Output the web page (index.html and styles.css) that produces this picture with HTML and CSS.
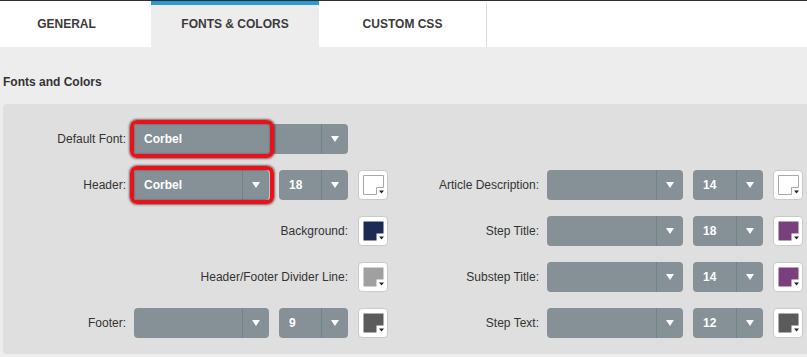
FILE: index.html
```html
<!DOCTYPE html>
<html>
<head>
  <title>Fonts &amp; Colors</title>
  <link rel="stylesheet" href="styles.css">
</head>
<body>
  <div class="tabs">
    <div class="tab tab-first">GENERAL</div>
    <div class="tab active">FONTS &amp; COLORS</div>
    <div class="tab tab-last">CUSTOM CSS</div>
  </div>

  <div class="content">
    <h2>Fonts and Colors</h2>
    <div class="panel">
      <div class="grid grid-left">
        <label class="label">Default Font:</label>
        <div class="select select-wide highlight"><span>Corbel</span><i class="arrow"></i></div>

        <label class="label">Header:</label>
        <div class="select highlight"><span>Corbel</span><i class="arrow"></i></div>
        <div class="select"><span>18</span><i class="arrow"></i></div>
        <div class="swatch swatch-white"><svg width="30" height="30"><path class="fill" d="M5.5 5.5H25.5V17.5H18.5V24.5H5.5Z" fill="#ffffff"/><path d="M21 20.5h5l-2.5 3z" fill="#222"/></svg></div>

        <label class="label label-long">Background:</label>
        <div class="swatch"><svg width="30" height="30"><path class="fill" d="M5.5 5.5H25.5V17.5H18.5V24.5H5.5Z" fill="#1c2a56"/><path d="M21 20.5h5l-2.5 3z" fill="#222"/></svg></div>

        <label class="label label-long">Header/Footer Divider Line:</label>
        <div class="swatch"><svg width="30" height="30"><path class="fill" d="M5.5 5.5H25.5V17.5H18.5V24.5H5.5Z" fill="#a0a0a0"/><path d="M21 20.5h5l-2.5 3z" fill="#222"/></svg></div>

        <label class="label">Footer:</label>
        <div class="select"><span></span><i class="arrow"></i></div>
        <div class="select"><span>9</span><i class="arrow"></i></div>
        <div class="swatch"><svg width="30" height="30"><path class="fill" d="M5.5 5.5H25.5V17.5H18.5V24.5H5.5Z" fill="#5b5b5b"/><path d="M21 20.5h5l-2.5 3z" fill="#222"/></svg></div>
      </div>

      <div class="grid grid-right">
        <label class="label">Article Description:</label>
        <div class="select"><span></span><i class="arrow"></i></div>
        <div class="select"><span>14</span><i class="arrow"></i></div>
        <div class="swatch swatch-white"><svg width="30" height="30"><path class="fill" d="M5.5 5.5H25.5V17.5H18.5V24.5H5.5Z" fill="#ffffff"/><path d="M21 20.5h5l-2.5 3z" fill="#222"/></svg></div>

        <label class="label">Step Title:</label>
        <div class="select"><span></span><i class="arrow"></i></div>
        <div class="select"><span>18</span><i class="arrow"></i></div>
        <div class="swatch"><svg width="30" height="30"><path class="fill" d="M5.5 5.5H25.5V17.5H18.5V24.5H5.5Z" fill="#7a407e"/><path d="M21 20.5h5l-2.5 3z" fill="#222"/></svg></div>

        <label class="label">Substep Title:</label>
        <div class="select"><span></span><i class="arrow"></i></div>
        <div class="select"><span>14</span><i class="arrow"></i></div>
        <div class="swatch"><svg width="30" height="30"><path class="fill" d="M5.5 5.5H25.5V17.5H18.5V24.5H5.5Z" fill="#7a407e"/><path d="M21 20.5h5l-2.5 3z" fill="#222"/></svg></div>

        <label class="label">Step Text:</label>
        <div class="select"><span></span><i class="arrow"></i></div>
        <div class="select"><span>12</span><i class="arrow"></i></div>
        <div class="swatch"><svg width="30" height="30"><path class="fill" d="M5.5 5.5H25.5V17.5H18.5V24.5H5.5Z" fill="#5b5b5b"/><path d="M21 20.5h5l-2.5 3z" fill="#222"/></svg></div>
      </div>
    </div>
  </div>
</body>
</html>
```

FILE: styles.css
```css
body {
  margin: 0;
  font-family: "Liberation Sans", Arial, sans-serif;
  font-size: 12px;
  color: #333;
  background: #ededed;
  overflow: hidden;
}

.tabs {
  display: flex;
  height: 46px;
  background: #fff;
  border-top: 1px solid #2b3035;
}

.tab {
  display: flex;
  align-items: center;
  justify-content: center;
  box-sizing: border-box;
  width: 168px;
  height: 46px;
  padding-bottom: 5px;
  border-top: 4px solid transparent;
  font-weight: bold;
  color: #3a3a3a;
}

.tab-first {
  width: 151px;
  padding-right: 18px;
}

.tab-last {
  width: 168px;
  border-right: 1px solid #dcdcdc;
}

.tab.active {
  background: #ededed;
  border-top-color: #2f9ad0;
}

.content {
  padding: 28px 0 0 3px;
}

.content h2 {
  margin: 0 0 15px 0;
  font-size: 12px;
  line-height: 14px;
  font-weight: bold;
  color: #333;
}

.panel {
  display: flex;
  width: 830px;
  background: #dfdfdf;
  border-radius: 4px;
  padding: 20px 0 16px 0;
}

.grid {
  display: grid;
  grid-auto-rows: 30px;
  row-gap: 16px;
  column-gap: 10px;
  align-items: center;
}

.grid-left {
  grid-template-columns: 121px 135px 69px 30px;
}

.grid-right {
  grid-template-columns: 139px 136px 70px 30px;
  margin-left: 10px;
  padding-top: 46px;
}

.label {
  grid-column: 1;
  text-align: right;
  margin-right: -2px;
  white-space: nowrap;
  color: #333;
}

.label-long {
  grid-column: 1 / 4;
  margin-right: 0;
}

.select {
  position: relative;
  display: flex;
  height: 30px;
  background: #859097;
  border-radius: 4px;
  color: #fff;
  font-weight: bold;
}

.select span {
  flex: 1;
  padding-left: 10px;
  line-height: 30px;
}

.select .arrow {
  width: 26px;
  border-left: 1px solid #76828a;
  display: flex;
  align-items: center;
  justify-content: center;
}

.select .arrow::after {
  content: "";
  border-left: 4px solid transparent;
  border-right: 4px solid transparent;
  border-top: 6px solid #fff;
}

.select-wide {
  grid-column: 2 / 4;
}

/* red annotation boxes drawn over the two font pickers */
.highlight::before {
  content: "";
  position: absolute;
  left: -4px;
  top: -4px;
  width: 144px;
  height: 38px;
  box-sizing: border-box;
  border: 4px solid #e8121a;
  border-radius: 7px;
  box-shadow: 0 0 2px 1px rgba(60, 0, 0, 0.55), inset 0 0 2px rgba(60, 0, 0, 0.5);
}

.swatch {
  width: 30px;
  height: 30px;
  box-sizing: border-box;
  background: #fff;
  border: 1px solid #c9c9c9;
  border-radius: 4px;
}

.swatch svg {
  display: block;
  margin: -1px;
}

.swatch .fill {
  stroke: none;
}

.swatch-white .fill {
  stroke: #a8a8a8;
}
```
